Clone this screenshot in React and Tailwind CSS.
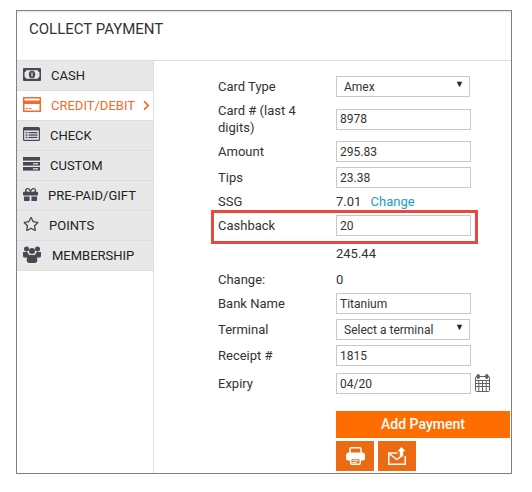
import { FaGift, FaRegStar, FaChevronRight } from 'react-icons/fa';

const CashIcon = () => (
  <svg width="18" height="13" viewBox="0 0 18 13">
    <rect width="18" height="13" rx="1" fill="#454a52" />
    <path d="M3 2.2H15C15 3.5 15.6 4 16.4 4V9C15.6 9 15 9.6 15 10.8H3C3 9.6 2.4 9 1.6 9V4C2.4 4 3 3.5 3 2.2Z" fill="#e8e8e8" />
    <ellipse cx="9" cy="6.5" rx="3.2" ry="3.8" fill="#454a52" />
    <rect x="8.4" y="4.5" width="1.2" height="4" fill="#e8e8e8" />
  </svg>
);

const CardIcon = () => (
  <svg width="18" height="15" viewBox="0 0 18 15" fill="none" className="text-[#f26a2e]">
    <rect x="0.75" y="0.75" width="16.5" height="13.5" stroke="currentColor" strokeWidth="1.5" />
    <rect x="1" y="3.5" width="16" height="3.5" fill="currentColor" />
    <rect x="2.5" y="11" width="2.5" height="1" fill="currentColor" />
    <rect x="6" y="11" width="2.5" height="1" fill="currentColor" />
  </svg>
);

const CheckIcon = () => (
  <svg width="17" height="14" viewBox="0 0 17 14">
    <rect width="17" height="14" rx="1.5" fill="#454a52" />
    <rect x="1.2" y="3.5" width="14.6" height="9.3" fill="#e8e8e8" />
    <rect x="2.5" y="5" width="2" height="1.3" fill="#454a52" />
    <rect x="5.5" y="5" width="9" height="1.3" fill="#454a52" />
    <rect x="2.5" y="7.4" width="2" height="1.3" fill="#454a52" />
    <rect x="5.5" y="7.4" width="9" height="1.3" fill="#454a52" />
    <rect x="2.5" y="9.8" width="2" height="1.3" fill="#454a52" />
    <rect x="5.5" y="9.8" width="9" height="1.3" fill="#454a52" />
  </svg>
);

const CustomIcon = () => (
  <svg width="17" height="14" viewBox="0 0 17 14">
    <rect width="17" height="3.6" fill="#454a52" />
    <rect y="5" width="17" height="3.6" fill="#454a52" />
    <rect y="10" width="17" height="3.6" fill="#454a52" />
    <rect x="10" y="6.2" width="5" height="1.2" fill="#e8e8e8" />
    <rect x="10" y="11.2" width="5" height="1.2" fill="#e8e8e8" />
  </svg>
);

const UsersIcon = () => (
  <svg width="18" height="17" viewBox="0 0 18 17" fill="#454a52">
    <circle cx="3.5" cy="3" r="2.5" />
    <circle cx="14.5" cy="3" r="2.5" />
    <circle cx="9" cy="5" r="3" />
    <path d="M0 6.5C0 5.8 1 6 3.5 6C4.3 6 4.8 6.5 5 7C5.2 8 5.8 8.6 6.4 9C5.2 9.5 4.5 10.3 4.2 11.5H1.5C0.6 11.5 0 10.9 0 10Z" />
    <path d="M18 6.5C18 5.8 17 6 14.5 6C13.7 6 13.2 6.5 13 7C12.8 8 12.2 8.6 11.6 9C12.8 9.5 13.5 10.3 13.8 11.5H16.5C17.4 11.5 18 10.9 18 10Z" />
    <path d="M6.5 9H11.5C13.2 9 14.2 10.2 14.2 12V14.5C14.2 15.8 13.2 17 11.8 17H6.2C4.8 17 3.8 15.8 3.8 14.5V12C3.8 10.2 4.8 9 6.5 9Z" />
  </svg>
);

const CalendarIcon = () => (
  <svg width="15" height="18" viewBox="0 0 15 18" fill="none" stroke="#5f6368" strokeWidth="1">
    <rect x="0.5" y="2.5" width="14" height="15" rx="1" />
    <path d="M0.5 6.5H14.5M0.5 9.5H14.5M0.5 12.5H14.5M3.8 6.5V17.5M7.5 6.5V17.5M11.2 6.5V17.5" />
    <rect x="2" y="0.5" width="2.4" height="4" rx="1" fill="#5f6368" />
    <rect x="10.6" y="0.5" width="2.4" height="4" rx="1" fill="#5f6368" />
  </svg>
);

const PrinterIcon = () => (
  <svg width="19" height="18" viewBox="0 0 19 18" fill="none">
    <path d="M4 7V1.5C4 1 4.5 0.75 5 0.75H14C14.5 0.75 15 1 15 1.5V7" stroke="white" strokeWidth="1.5" />
    <path d="M2.5 5.5H16.5C17.6 5.5 19 6.5 19 8V11.5C19 12.6 18 13.5 17 13.5H15V11H4V13.5H2C1 13.5 0 12.6 0 11.5V8C0 6.5 1.4 5.5 2.5 5.5Z" fill="white" />
    <path d="M4.75 11.5H14.25V16C14.25 16.7 13.7 17.25 13 17.25H6C5.3 17.25 4.75 16.7 4.75 16Z" stroke="white" strokeWidth="1.5" />
    <rect x="6.5" y="13.2" width="6" height="1" fill="white" />
    <rect x="6.5" y="15" width="4" height="1" fill="white" />
  </svg>
);

const ShareMailIcon = () => (
  <svg width="18" height="18" viewBox="0 0 18 18" fill="none">
    <path d="M9.5 6H0.75V17.25H17.25V9" stroke="white" strokeWidth="1.5" />
    <path d="M1 6.5L9 12.5L13.5 9" stroke="white" strokeWidth="1.5" />
    <path d="M13.5 0L17.5 4.2H15.2V9.5H11.8V4.2H9.5Z" fill="white" />
  </svg>
);

const MENU = [
  { label: 'CASH', icon: <CashIcon />, gap: 'w-[28px]' },
  { label: 'CREDIT/DEBIT', icon: <CardIcon />, gap: 'w-[28px]', active: true },
  { label: 'CHECK', icon: <CheckIcon />, gap: 'w-[27px]' },
  { label: 'CUSTOM', icon: <CustomIcon />, gap: 'w-[27px]' },
  { label: 'PRE-PAID/GIFT', icon: <FaGift size={15} color="#454a52" />, gap: 'w-[25px]' },
  { label: 'POINTS', icon: <FaRegStar size={16} color="#454a52" />, gap: 'w-[26px]' },
  { label: 'MEMBERSHIP', icon: <UsersIcon />, gap: 'w-[29px]' },
];

const TextBox = ({ value }) => (
  <div className="w-[135px] h-[21px] border border-[#c8c8c8] bg-white pl-[3px] flex items-center text-[12px] text-[#333]">{value}</div>
);

const SelectBox = ({ value }) => (
  <div className="w-[134px] h-[21px] border border-[#c8c8c8] bg-white pl-[7px] pr-[5px] flex items-center justify-between text-[12px] text-[#333]">
    <span>{value}</span>
    <span className="text-[9px] text-[#222] mb-1">▼</span>
  </div>
);

const Row = ({ label, height, className = '', children }) => (
  <div className={`flex items-center ${height} ${className}`}>
    <div className="w-[118px] text-[13px] leading-[17px] text-[#333]">{label}</div>
    {children}
  </div>
);

export default function App() {
  return (
    <div className="w-[532px] h-[492px] bg-white pt-[10px] pl-[16px] font-['Roboto',sans-serif]">
      <div className="w-[496px] h-[464px] border border-[#808080] flex flex-col">
        <div className="h-[50px] shrink-0 border-b border-[#dedede] pl-[12px] pt-[9px] text-[15px] leading-[18px] text-[#333] shadow-[inset_0_3px_3px_-2px_#e4e4e4]">
          COLLECT PAYMENT
        </div>
        <div className="flex flex-1">
          <div className="w-[137px] shrink-0 border-r border-[#dedede]">
            {MENU.map((m) => (
              <div
                key={m.label}
                className={`h-[30px] border-b border-[#dedede] flex items-center pl-[6px] text-[13px] ${m.active ? 'bg-white text-[#f26a2e]' : 'bg-[#e8e8e8] text-[#222]'}`}
              >
                <div className={`${m.gap} shrink-0 flex items-center mb-[3px]`}>{m.icon}</div>
                <span>{m.label}</span>
                {m.active && <FaChevronRight size={11} className="ml-[6px] text-[#f26a2e]" />}
              </div>
            ))}
          </div>
          <div className="pl-[64px] pt-[15px] flex flex-col">
            <Row label="Card Type" height="h-[21px]"><SelectBox value="Amex" /></Row>
            <Row label={<>Card # (last 4<br />digits)</>} height="h-[34px]" className="mt-[5px]"><TextBox value="8978" /></Row>
            <Row label="Amount" height="h-[21px]" className="mt-[5px]"><TextBox value="295.83" /></Row>
            <Row label="Tips" height="h-[21px]" className="mt-[5px]"><TextBox value="23.38" /></Row>
            <Row label="SSG" height="h-[25px]" className="mt-[1px]">
              <div className="text-[13px] text-[#333]">7.01 <a className="ml-[6px] text-[#17a2b8]">Change</a></div>
            </Row>
            <div className="relative">
              <Row label="Cashback" height="h-[21px]" className="mt-[1px]"><TextBox value="20" /></Row>
              <div className="absolute left-[-7px] top-[-4px] w-[267px] h-[34px] border-[3px] border-[#e8483f]" />
            </div>
            <Row label="" height="h-[21px]" className="mt-[7px]"><span className="text-[13px] text-[#333]">245.44</span></Row>
            <Row label="Change:" height="h-[21px]" className="mt-[5px]"><span className="text-[13px] text-[#333]">0</span></Row>
            <Row label="Bank Name" height="h-[21px]" className="mt-[3px]"><TextBox value="Titanium" /></Row>
            <Row label="Terminal" height="h-[21px]" className="mt-[5px]"><SelectBox value="Select a terminal" /></Row>
            <Row label="Receipt #" height="h-[21px]" className="mt-[5px]"><TextBox value="1815" /></Row>
            <Row label="Expiry" height="h-[21px]" className="mt-[7px]">
              <TextBox value="04/20" />
              <div className="ml-[4px] mb-[2px]"><CalendarIcon /></div>
            </Row>
            <div className="ml-[118px] mt-[17px] w-[174px]">
              <button className="w-full h-[27px] bg-[#ff6d00] text-white text-[14px] font-medium">Add Payment</button>
              <div className="flex gap-[4px] mt-[3px]">
                <button className="w-[38px] h-[30px] bg-[#ec6a12] flex items-center justify-center"><PrinterIcon /></button>
                <button className="w-[38px] h-[30px] bg-[#ec6a12] flex items-center justify-center"><ShareMailIcon /></button>
              </div>
            </div>
          </div>
        </div>
      </div>
    </div>
  );
}
